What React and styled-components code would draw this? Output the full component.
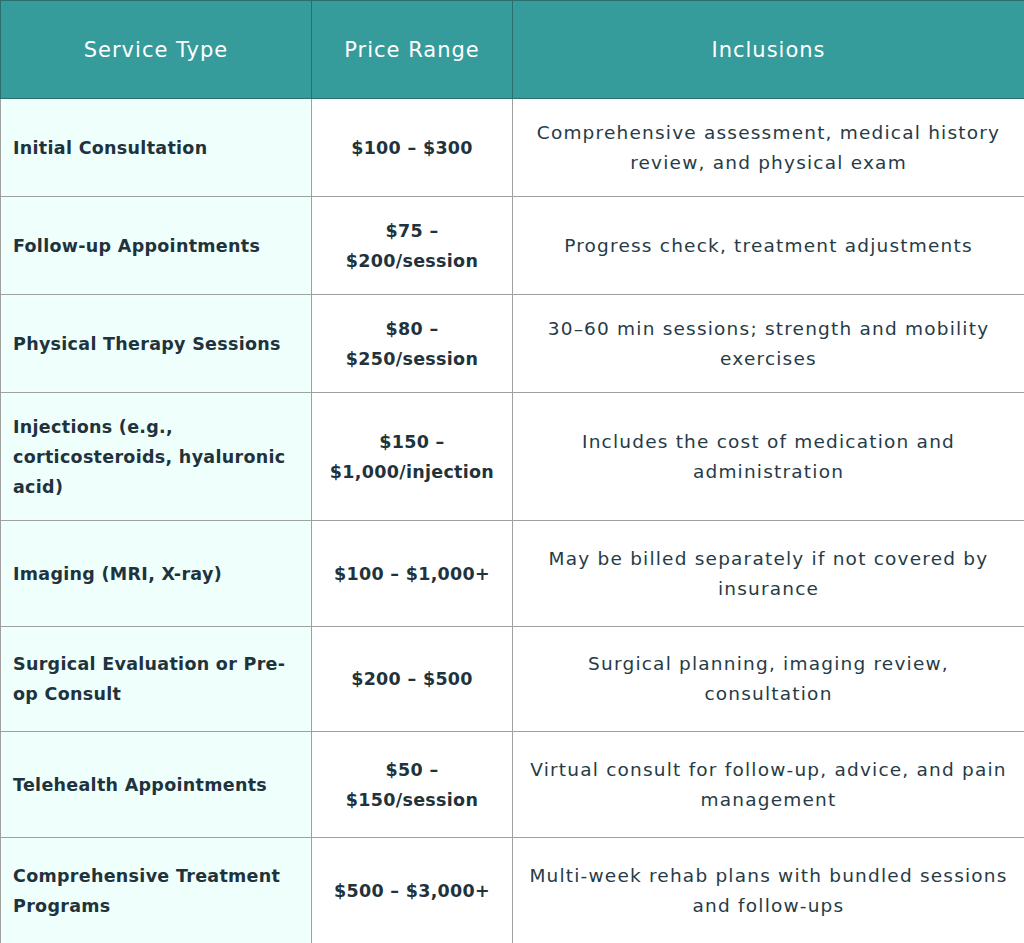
import React from 'react';
import styled, { createGlobalStyle } from 'styled-components';

const columns = [311, 201, 512];

const rows = [
	{ service: 'Initial Consultation', price: '$100 – $300', inclusions: 'Comprehensive assessment, medical history review, and physical exam', height: 98 },
	{ service: 'Follow-up Appointments', price: '$75 – $200/session', inclusions: 'Progress check, treatment adjustments', height: 98 },
	{ service: 'Physical Therapy Sessions', price: '$80 – $250/session', inclusions: '30–60 min sessions; strength and mobility exercises', height: 98 },
	{ service: 'Injections (e.g., corticosteroids, hyaluronic acid)', price: '$150 – $1,000/injection', inclusions: 'Includes the cost of medication and administration', height: 128 },
	{ service: 'Imaging (MRI, X-ray)', price: '$100 – $1,000+', inclusions: 'May be billed separately if not covered by insurance', height: 106 },
	{ service: 'Surgical Evaluation or Pre-op Consult', price: '$200 – $500', inclusions: 'Surgical planning, imaging review, consultation', height: 105 },
	{ service: 'Telehealth Appointments', price: '$50 – $150/session', inclusions: 'Virtual consult for follow-up, advice, and pain management', height: 106 },
	{ service: 'Comprehensive Treatment Programs', price: '$500 – $3,000+', inclusions: 'Multi-week rehab plans with bundled sessions and follow-ups', height: 106 },
];

const App = () => {
	return (
		<>
			<GlobalStyle />
			<Table>
				<colgroup>
					{columns.map((w) => (
						<Col key={w} $width={w} />
					))}
				</colgroup>
				<thead>
					<tr>
						<HeadCell>Service Type</HeadCell>
						<HeadCell>Price Range</HeadCell>
						<HeadCell>Inclusions</HeadCell>
					</tr>
				</thead>
				<tbody>
					{rows.map((row) => (
						<Row key={row.service} $height={row.height}>
							<ServiceCell>{row.service}</ServiceCell>
							<PriceCell>{row.price}</PriceCell>
							<InclusionCell>{row.inclusions}</InclusionCell>
						</Row>
					))}
				</tbody>
			</Table>
		</>
	);
};

const GlobalStyle = createGlobalStyle`
	body {
		margin: 0;
		background: #ffffff;
		font-family: 'DejaVu Sans', 'Noto Sans', sans-serif;
	}
`;

const Table = styled.table`
	width: 1024px;
	table-layout: fixed;
	border-collapse: collapse;
	color: #1f333d;
`;

const Col = styled.col`
	width: ${(p) => p.$width}px;
`;

const Row = styled.tr`
	height: ${(p) => p.$height}px;
`;

const HeadCell = styled.th`
	height: 98px;
	padding: 0 12px;
	box-sizing: border-box;
	background: #369b9b;
	border: 1px solid #2a6e6e;
	color: #ffffff;
	font-size: 21px;
	font-weight: 400;
	letter-spacing: 1px;
	text-align: center;
	vertical-align: middle;
`;

const Cell = styled.td`
	padding: 10px 12px;
	border: 1px solid #a0a0a0;
	font-size: 17.5px;
	line-height: 30px;
	letter-spacing: 0.3px;
	vertical-align: middle;
	background: #ffffff;
`;

const ServiceCell = styled(Cell)`
	background: #effffc;
	font-weight: 600;
	text-align: left;
`;

const PriceCell = styled(Cell)`
	font-weight: 600;
	text-align: center;
`;

const InclusionCell = styled(Cell)`
	padding: 10px 16px;
	color: #263b46;
	font-size: 18.5px;
	font-weight: 400;
	letter-spacing: 1.2px;
	text-align: center;
`;

export default App;
